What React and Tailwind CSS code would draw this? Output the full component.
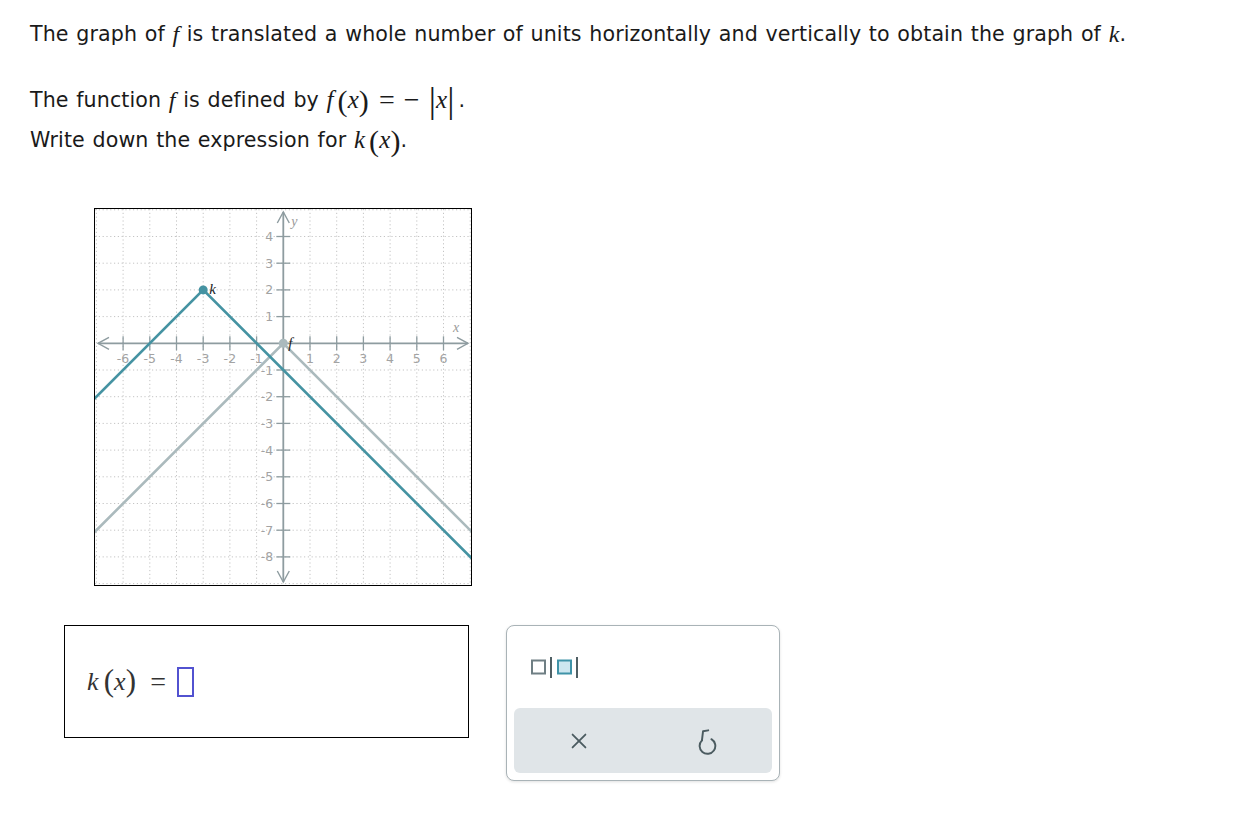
const OX = 188.3;
const OY = 134.3;
const U = 26.7;
const X = (i) => OX + i * U;
const Y = (j) => OY - j * U;

const serif = { fontFamily: '"Liberation Serif", "DejaVu Serif", serif' };

function M({ children, className = '' }) {
  return (
    <span className={'italic ' + className} style={serif}>
      {children}
    </span>
  );
}

function Graph() {
  const xs = [-7, -6, -5, -4, -3, -2, -1, 1, 2, 3, 4, 5, 6, 7];
  const ys = [-9, -8, -7, -6, -5, -4, -3, -2, -1, 1, 2, 3, 4, 5];
  const axis = '#8e9ca0';
  const teal = '#4593a2';
  const grey = '#abbabd';
  const label = '#a3a3a3';
  return (
    <div className="w-[378px] h-[378px] border border-black bg-white">
      <svg width="376" height="376" viewBox="0 0 376 376">
        {xs.map((i) => (
          <line key={'gx' + i} x1={X(i)} y1="0" x2={X(i)} y2="376" stroke="#c4c4c4" strokeWidth="1" strokeDasharray="1.2 2.6" />
        ))}
        {ys.map((j) => (
          <line key={'gy' + j} x1="0" y1={Y(j)} x2="376" y2={Y(j)} stroke="#c4c4c4" strokeWidth="1" strokeDasharray="1.2 2.6" />
        ))}

        {/* axes */}
        <line x1="3" y1={OY} x2="373" y2={OY} stroke={axis} strokeWidth="1.8" />
        <line x1={OX} y1="3" x2={OX} y2="373" stroke={axis} strokeWidth="1.8" />
        <polyline points={`14,${OY - 6} 3,${OY} 14,${OY + 6}`} fill="none" stroke={axis} strokeWidth="1.4" />
        <polyline points={`362,${OY - 6} 373,${OY} 362,${OY + 6}`} fill="none" stroke={axis} strokeWidth="1.4" />
        <polyline points={`${OX - 6},14 ${OX},3 ${OX + 6},14`} fill="none" stroke={axis} strokeWidth="1.4" />
        <polyline points={`${OX - 6},362 ${OX},373 ${OX + 6},362`} fill="none" stroke={axis} strokeWidth="1.4" />

        {[-6, -5, -4, -3, -2, -1, 1, 2, 3, 4, 5, 6].map((i) => (
          <g key={'tx' + i}>
            <line x1={X(i)} y1={OY - 7} x2={X(i)} y2={OY + 7} stroke={axis} strokeWidth="1.3" />
            <text x={X(i)} y={OY + 20} fill={label} fontSize="12.5" textAnchor="middle" fontFamily="DejaVu Sans, sans-serif">
              {i}
            </text>
          </g>
        ))}
        {[-8, -7, -6, -5, -4, -3, -2, -1, 1, 2, 3, 4].map((j) => (
          <g key={'ty' + j}>
            <line x1={OX - 7} y1={Y(j)} x2={OX + 7} y2={Y(j)} stroke={axis} strokeWidth="1.3" />
            <text x={OX - 10} y={Y(j) + 4.5} fill={label} fontSize="12.5" textAnchor="end" fontFamily="DejaVu Sans, sans-serif">
              {j}
            </text>
          </g>
        ))}
        <text x={OX + 8} y="17" fill="#9a9a9a" fontSize="14" fontStyle="italic" fontFamily="Liberation Serif, serif">y</text>
        <text x="358" y={OY - 11} fill="#9a9a9a" fontSize="14" fontStyle="italic" fontFamily="Liberation Serif, serif">x</text>

        {/* f(x) = -|x| */}
        <polyline points={`${X(-8)},${Y(-8)} ${X(0)},${Y(0)} ${X(8)},${Y(-8)}`} fill="none" stroke={grey} strokeWidth="2.6" />
        <circle cx={X(0)} cy={Y(0)} r="4.5" fill={grey} />
        <text x={OX + 5} y={OY + 5} fill="#222" fontSize="15" fontStyle="italic" fontFamily="Liberation Serif, serif">f</text>

        {/* k(x) = -|x+3| + 2 */}
        <polyline points={`${X(-9)},${Y(-4)} ${X(-3)},${Y(2)} ${X(8)},${Y(-9)}`} fill="none" stroke={teal} strokeWidth="2.6" />
        <circle cx={X(-3)} cy={Y(2)} r="4.5" fill={teal} />
        <text x={X(-3) + 6} y={Y(2) + 4} fill="#222" fontSize="15" fontStyle="italic" fontFamily="Liberation Serif, serif">k</text>
      </svg>
    </div>
  );
}

function Toolbar() {
  return (
    <div className="ml-[37px] w-[274px] h-[156px] rounded-lg border border-[#a9b3b7] bg-white shadow-[0_1px_3px_rgba(0,0,0,0.12)] flex flex-col px-[7px] pb-[7px]">
      <div className="flex-1 flex items-center pl-[17px] pt-[2px]">
        <svg width="50" height="26" viewBox="0 0 50 26">
          <rect x="1" y="5.5" width="13" height="13" fill="none" stroke="#6f7f84" strokeWidth="2" />
          <line x1="20" y1="2" x2="20" y2="23" stroke="#4f5f64" strokeWidth="2" />
          <rect x="27" y="5.5" width="13" height="13" fill="#cde7f0" stroke="#3f93a8" strokeWidth="2" />
          <line x1="46" y1="2" x2="46" y2="23" stroke="#4f5f64" strokeWidth="2" />
        </svg>
      </div>
      <div className="h-[65px] rounded-md bg-[#e0e5e8] flex items-center">
        <div className="flex-1 flex justify-center">
          <svg width="22" height="22" viewBox="0 0 24 24" fill="none" stroke="#4b5b60" strokeWidth="2" strokeLinecap="round">
            <path d="M5 5 L19 19 M19 5 L5 19" />
          </svg>
        </div>
        <div className="flex-1 flex justify-center">
          <svg width="29" height="29" viewBox="0 0 24 24" fill="none" stroke="#4b5b60" strokeWidth="1.6" strokeLinecap="round" strokeLinejoin="round">
            <path d="M7.4 11.9 A6.5 6.5 0 1 0 15.25 10.9" />
            <path d="M12.6 3.6 L8.3 4.4 L7.4 11.9" />
          </svg>
        </div>
      </div>
    </div>
  );
}

export default function App() {
  return (
    <div
      className="min-h-screen bg-white pl-[30px] pt-[20px] text-[#1a1a1a] tracking-[0.1px]"
      style={{ fontFamily: '"DejaVu Sans", Verdana, sans-serif', wordSpacing: '1px' }}
    >
      <div className="h-[28px] flex items-center text-[20.6px]">
        <span>The graph of&nbsp;</span>
        <M className="text-[24px]">f</M>
        <span>&nbsp;is translated a whole number of units horizontally and vertically to obtain the graph of&nbsp;</span>
        <M className="text-[24px]">k</M>
        <span>.</span>
      </div>

      <div className="mt-[32px] h-[40px] flex items-center text-[20.6px]">
        <span>The function&nbsp;</span>
        <M className="text-[24px]">f</M>
        <span>&nbsp;is defined by&nbsp;</span>
        <span className="text-[25px] flex items-center" style={serif}>
          <span className="italic">f</span>
          <span className="text-[30px] ml-[4px]">(</span>
          <span className="italic">x</span>
          <span className="text-[30px]">)</span>
          <span className="ml-[10px] mr-[9px] text-[28px]">=</span>
          <span className="text-[28px]">−</span>
          <span className="ml-[9px] text-[36px] leading-none">|</span>
          <span className="italic">x</span>
          <span className="text-[36px] leading-none">|</span>
        </span>
        <span className="ml-[4px]">.</span>
      </div>

      <div className="h-[40px] flex items-center text-[20.6px]">
        <span>Write down the expression for&nbsp;</span>
        <span className="text-[25px] flex items-center" style={serif}>
          <span className="italic">k</span>
          <span className="text-[30px] ml-[4px]">(</span>
          <span className="italic">x</span>
          <span className="text-[30px]">)</span>
        </span>
        <span>.</span>
      </div>

      <div className="mt-[48px] ml-[64px]">
        <Graph />
      </div>

      <div className="mt-[39px] ml-[34px] flex items-start">
        <div className="w-[405px] h-[113px] border border-black bg-white flex items-center pl-[22px]">
          <span className="text-[26px] flex items-center text-[#333]" style={serif}>
            <span className="italic">k</span>
            <span className="text-[31px] ml-[5px]">(</span>
            <span className="italic">x</span>
            <span className="text-[31px]">)</span>
            <span className="ml-[14px] mr-[11px] text-[28px]">=</span>
            <span className="inline-block w-[17px] h-[30px] border-2 border-[#5252d0]" />
          </span>
        </div>
        <Toolbar />
      </div>
    </div>
  );
}
